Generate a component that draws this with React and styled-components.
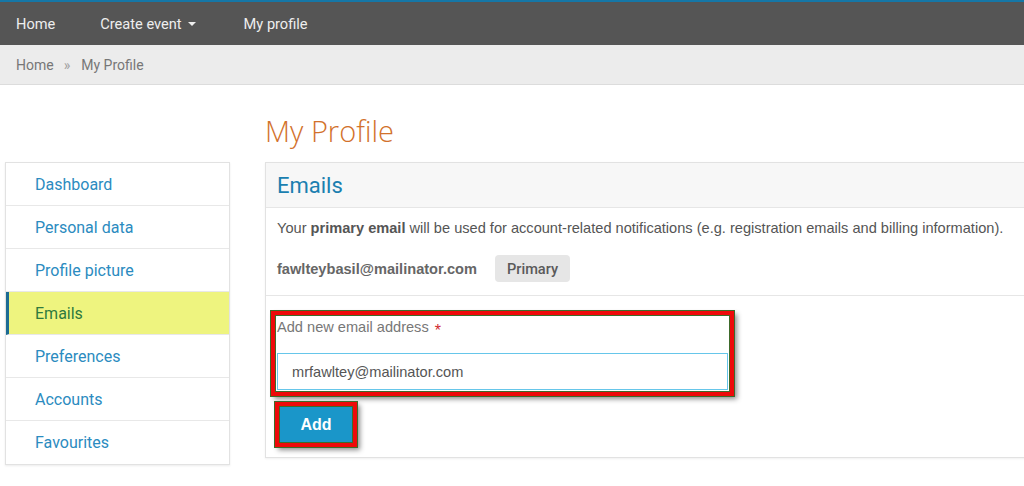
import React from "react";
import styled, { createGlobalStyle } from "styled-components";

const Global = createGlobalStyle`
  html, body { margin: 0; padding: 0; background: #fff; overflow: hidden; }
  body { font-family: Roboto, "Liberation Sans", sans-serif; }
  * { box-sizing: border-box; }
`;

const Page = styled.div`
  width: 1024px;
  height: 486px;
  overflow: hidden;
`;

const NavBar = styled.nav`
  height: 45px;
  background: #555555;
  border-top: 2px solid #1577a7;
  display: flex;
  align-items: center;
  padding-left: 16px;
  gap: 45px;
`;

const NavItem = styled.a`
  color: #eeeeee;
  font-size: 14.6px;
  text-decoration: none;
  display: flex;
  align-items: center;
  margin-right: ${(p) => p.$extra || 0}px;
`;

const Caret = styled.span`
  display: inline-block;
  width: 0;
  height: 0;
  margin-left: 6px;
  border-left: 4px solid transparent;
  border-right: 4px solid transparent;
  border-top: 4px solid #eeeeee;
`;

const Crumbs = styled.div`
  height: 40px;
  background: #ececec;
  border-bottom: 1px solid #dcdcdc;
  display: flex;
  align-items: center;
  padding-left: 16px;
  font-size: 14px;
  color: #777777;
`;

const Sep = styled.span`
  color: #a0a0a0;
  margin: 0 11px 0 10px;
`;

const Main = styled.div`
  display: grid;
  grid-template-columns: 225px 780px;
  column-gap: 35px;
  padding-left: 5px;
`;

const Title = styled.h1`
  grid-column: 2;
  margin: 29px 0 14px;
  font-family: "Open Sans", sans-serif;
  font-weight: 300;
  font-size: 29px;
  line-height: 34px;
  color: #d2712b;
`;

const Side = styled.ul`
  grid-column: 1;
  list-style: none;
  margin: 0;
  padding: 0;
  align-self: start;
  border: 1px solid #e2e2e2;
  box-shadow: 0 1px 2px rgba(0, 0, 0, 0.08);
  background: #fff;
`;

const SideItem = styled.li`
  height: 43px;
  display: flex;
  align-items: center;
  padding-left: ${(p) => (p.$active ? 26 : 29)}px;
  font-size: 16px;
  color: ${(p) => (p.$active ? "#2f7a3e" : "#2b8bc0")};
  background: ${(p) => (p.$active ? "#eef47f" : "#fff")};
  border-left: ${(p) => (p.$active ? "3px solid #1c6b93" : "none")};
  border-bottom: 1px solid #e8e8e8;
  &:last-child { border-bottom: none; }
`;

const Panel = styled.section`
  grid-column: 2;
  align-self: start;
  border: 1px solid #e2e2e2;
  box-shadow: 0 1px 2px rgba(0, 0, 0, 0.06);
  background: #fff;
`;

const PanelHead = styled.div`
  height: 45px;
  background: #f7f7f7;
  border-bottom: 1px solid #e6e6e6;
  display: flex;
  align-items: center;
  padding-left: 11px;
  font-size: 22px;
  color: #1a7fb0;
`;

const PanelBody = styled.div`
  padding: 10px 11px 13px;
  font-family: "Liberation Sans", Arial, sans-serif;
  font-size: 14.6px;
  color: #555555;
  border-bottom: 1px solid #e6e6e6;
`;

const Note = styled.p`
  margin: 0;
  line-height: 20px;
  white-space: nowrap;
`;

const EmailRow = styled.div`
  margin-top: 17px;
  display: flex;
  align-items: center;
  gap: 18px;
`;

const Address = styled.span`
  font-weight: bold;
  color: #666666;
`;

const Badge = styled.span`
  height: 27px;
  padding: 0 12px;
  display: flex;
  align-items: center;
  background: #e6e6e6;
  border-radius: 4px;
  font-family: Roboto, sans-serif;
  font-size: 14.6px;
  font-weight: 500;
  color: #5a5a5a;
`;

const FormArea = styled.div`
  padding: 15px 0 10px 5px;
  font-family: "Liberation Sans", Arial, sans-serif;
`;

const Marked = styled.div`
  border: 4px solid #ee0a0a;
  outline: 1px solid #3e6b2b;
  box-shadow: inset 0 0 0 1px #3e6b2b, 3px 3px 5px rgba(0, 0, 0, 0.45);
`;

const FieldBox = styled(Marked)`
  width: 463px;
  padding: 3px 2px 2px;
`;

const Label = styled.label`
  display: block;
  font-size: 14.6px;
  line-height: 18px;
  color: #777777;
  margin-bottom: 17px;
`;

const Star = styled.span`
  color: #d0282e;
  margin-left: 6px;
  font-size: 16px;
  line-height: 0;
  position: relative;
  top: 4px;
`;

const Input = styled.input`
  display: block;
  width: 451px;
  height: 37px;
  border: 1px solid #66c6ea;
  padding: 0 14px;
  font-family: "Liberation Sans", Arial, sans-serif;
  font-size: 14.6px;
  color: #555555;
  background: #fff;
  outline: none;
`;

const AddButton = styled(Marked).attrs({ as: "button" })`
  display: flex;
  align-items: center;
  justify-content: center;
  margin: 6px 0 0 4px;
  width: 82px;
  height: 45px;
  background: #1a96c9;
  color: #fff;
  font-family: "Liberation Sans", Arial, sans-serif;
  font-weight: bold;
  font-size: 16px;
  cursor: pointer;
`;

const menu = [
  "Dashboard",
  "Personal data",
  "Profile picture",
  "Emails",
  "Preferences",
  "Accounts",
  "Favourites",
];

export default function App() {
  return (
    <Page>
      <Global />
      <NavBar>
        <NavItem href="#">Home</NavItem>
        <NavItem href="#" $extra={3}>
          Create event
          <Caret />
        </NavItem>
        <NavItem href="#">My profile</NavItem>
      </NavBar>
      <Crumbs>
        <span>Home</span>
        <Sep>»</Sep>
        <span>My Profile</span>
      </Crumbs>
      <Main>
        <Title>My Profile</Title>
        <Side>
          {menu.map((m) => (
            <SideItem key={m} $active={m === "Emails"}>
              {m}
            </SideItem>
          ))}
        </Side>
        <Panel>
          <PanelHead>Emails</PanelHead>
          <PanelBody>
            <Note>
              Your <b>primary email</b> will be used for account-related
              notifications (e.g. registration emails and billing information).
            </Note>
            <EmailRow>
              <Address>fawlteybasil@mailinator.com</Address>
              <Badge>Primary</Badge>
            </EmailRow>
          </PanelBody>
          <FormArea>
            <FieldBox>
              <Label>
                Add new email address<Star>*</Star>
              </Label>
              <Input defaultValue="mrfawltey@mailinator.com" />
            </FieldBox>
            <AddButton>Add</AddButton>
          </FormArea>
        </Panel>
      </Main>
    </Page>
  );
}
